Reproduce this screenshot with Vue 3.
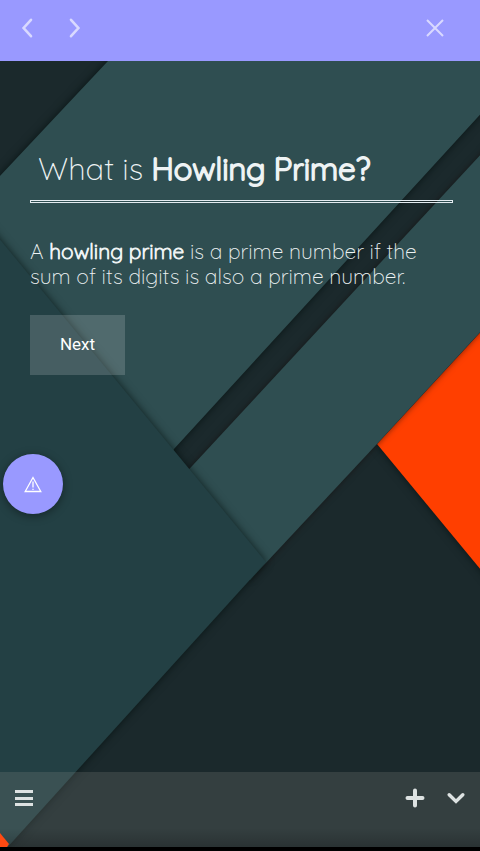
<script setup>
import { ref } from 'vue'

const page = ref(1)
function step(by) {
  page.value = Math.max(1, page.value + by)
}
</script>

<template>
  <div class="app">
    <header class="topbar">
      <button class="icon-btn" aria-label="Previous" @click="step(-1)">
        <svg width="24" height="24" viewBox="0 0 24 24"><path d="M16 3.800 8.600 12l7.400 8.200" /></svg>
      </button>
      <button class="icon-btn" aria-label="Forward" @click="step(1)">
        <svg width="24" height="24" viewBox="0 0 24 24"><path d="M8 3.800 15.400 12l-7.400 8.200" /></svg>
      </button>
      <button class="icon-btn close" aria-label="Close">
        <svg class="thin" width="24" height="24" viewBox="0 0 24 24"><path d="M4 4 20 20M20 4 4 20" /></svg>
      </button>
    </header>

    <div class="stage">
      <svg class="backdrop" viewBox="0 0 480 786" preserveAspectRatio="none" aria-hidden="true">
        <rect width="480" height="786" fill="#1b292c" />
        <polygon class="sheet" points="377,383 500,250 500,532" fill="#ff3f00" />
        <polygon class="sheet" points="-40,157.500 108,0 138,-32 520,-32 520,10 174,388 160,420 -40,300" fill="#2f4e51" />
        <polygon class="sheet over-orange" points="180,418 520,51 520,228 376,384 250,519 170,430" fill="#2f4e51" />
        <polygon class="sheet" points="-40,130 266,501 -14,810 -40,810" fill="#234044" />
      </svg>

      <main class="content">
        <h1>What is <b>Howling Prime?</b></h1>
        <hr />
        <p>A <b>howling prime</b> is a prime number if the sum of its digits is also a prime number.</p>
        <button class="next" @click="step(1)">Next</button>
      </main>

      <button class="report" aria-label="Report a problem">
        <svg width="18" height="17" viewBox="0 0 18 17">
          <path d="M9 1.500 1.200 15.500H16.800Z" />
          <path d="M9 5.500V11.500M9 12.800V14" />
        </svg>
      </button>

      <footer class="toolbar">
        <svg class="corner" width="10" height="14" viewBox="0 0 10 14" aria-hidden="true">
          <polygon points="0,0 9,11 7,14 0,14" fill="#ff4a12" />
        </svg>
        <button class="tool" aria-label="Menu">
          <svg width="18" height="18" viewBox="0 0 18 18"><path d="M0 2.500H18M0 9.500H18M0 15.500H18" /></svg>
        </button>
        <button class="tool plus" aria-label="Add">
          <svg class="round" width="20" height="20" viewBox="0 0 20 20"><path d="M10 2.500V17.500M2.500 10H17.500" /></svg>
        </button>
        <button class="tool" aria-label="Collapse">
          <svg class="round chevron" width="20" height="20" viewBox="0 0 20 20"><path d="M3.200 6.800 10 13.400 16.800 6.800" /></svg>
        </button>
      </footer>
    </div>
  </div>
</template>

<style>
body {
  background: #000;
}
</style>

<style scoped>
.app {
  box-sizing: border-box;
  display: flex;
  flex-direction: column;
  min-height: 100vh;
  padding-bottom: 4px;
  background: #000;
  color: #eef3f4;
  font-family: Quicksand, Lato, sans-serif;
}

button {
  padding: 0;
  border: 0;
  background: none;
  color: inherit;
  cursor: pointer;
}

svg {
  display: block;
}

.topbar {
  display: flex;
  gap: 16px;
  height: 61px;
  box-sizing: border-box;
  padding: 12px 29px 17px 11px;
  background: #9999ff;
}

.icon-btn {
  display: grid;
  place-items: center;
  width: 32px;
  height: 32px;
}

.icon-btn path {
  fill: none;
  stroke: #d9d9ff;
  stroke-width: 2.6;
  stroke-linecap: round;
}

.icon-btn .thin path {
  stroke-width: 2;
  stroke-linecap: butt;
}

.close {
  margin-left: auto;
}

.stage {
  position: relative;
  display: flex;
  flex: 1;
  flex-direction: column;
  isolation: isolate;
}

.backdrop {
  position: absolute;
  inset: 0;
  z-index: -1;
  width: 100%;
  height: 100%;
}

.sheet {
  filter: drop-shadow(0 0 4px rgba(0, 12, 10, 0.7));
}

.over-orange {
  filter: drop-shadow(0 0 3px rgba(20, 10, 8, 0.6));
}

.content {
  flex: 1;
  padding: 88px 27px 24px 30px;
}

h1 {
  margin: 0;
  padding: 0 8px;
  font-size: 31px;
  font-weight: 300;
  line-height: 40px;
}

b {
  font-weight: inherit;
  -webkit-text-stroke: 1px currentColor;
}

h1 b {
  -webkit-text-stroke-width: 2px;
}

hr {
  height: 1px;
  margin: 11px 0 36px;
  border: 1px solid #e4ebf0;
}

p {
  margin: 0 0 26px;
  font-size: 21px;
  font-weight: 300;
  line-height: 25px;
}

.next {
  width: 95px;
  height: 60px;
  padding-bottom: 2px;
  background: rgba(255, 255, 255, 0.16);
  color: #fff;
  font: 400 17px/20px Roboto, sans-serif;
}

.report {
  position: absolute;
  top: 393px;
  left: 3px;
  display: grid;
  place-items: center;
  width: 60px;
  height: 60px;
  border-radius: 50%;
  background: #9999ff;
  box-shadow: 0 2px 10px rgba(0, 0, 0, 0.4);
}

.report path {
  fill: none;
  stroke: #fff;
  stroke-width: 1.3;
}

.toolbar {
  position: relative;
  display: flex;
  align-items: flex-start;
  gap: 21px;
  height: 75px;
  box-sizing: border-box;
  padding: 16px 14px 0;
  background: linear-gradient(rgba(0, 0, 0, 0) 75%, rgba(0, 0, 0, 0.2)), rgba(140, 140, 136, 0.22);
}

.corner {
  position: absolute;
  bottom: 0;
  left: 0;
}

.tool {
  display: grid;
  place-items: center;
  width: 20px;
  height: 20px;
}

.tool path {
  fill: none;
  stroke: #dde2e2;
  stroke-width: 3;
}

.tool .round path {
  stroke-width: 4;
  stroke-linecap: round;
}

.tool .chevron path {
  stroke-width: 3.5;
}

.plus {
  margin-left: auto;
}
</style>
